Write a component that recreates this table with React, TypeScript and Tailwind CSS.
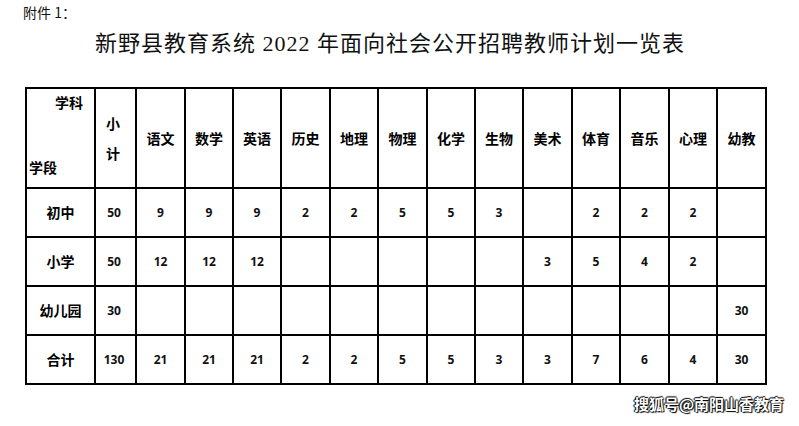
import React from "react";

const subjects = ["语文", "数学", "英语", "历史", "地理", "物理", "化学", "生物", "美术", "体育", "音乐", "心理", "幼教"];

const rows: { name: string; total: string; vals: string[] }[] = [
  { name: "初中", total: "50", vals: ["9", "9", "9", "2", "2", "5", "5", "3", "", "2", "2", "2", ""] },
  { name: "小学", total: "50", vals: ["12", "12", "12", "", "", "", "", "", "3", "5", "4", "2", ""] },
  { name: "幼儿园", total: "30", vals: ["", "", "", "", "", "", "", "", "", "", "", "", "30"] },
  { name: "合计", total: "130", vals: ["21", "21", "21", "2", "2", "5", "5", "3", "3", "7", "6", "4", "30"] },
];

export default function App() {
  return (
    <div className="w-[799px] h-[426px] bg-white text-black overflow-hidden font-[family-name:'Noto_Sans_CJK_SC',sans-serif]">
      <div className="pl-[23px] pt-[3px] text-[14px] leading-[18px] text-[#111]">附件 1：</div>
      <div className="pl-[95px] mt-[8px] text-[22px] leading-[30px] tracking-[1px] text-[#111] font-[family-name:'Liberation_Serif','Noto_Sans_CJK_SC',serif]">
        新野县教育系统 2022 年面向社会公开招聘教师计划一览表
      </div>
      <div className="ml-[25px] mt-[28px] w-fit bg-black p-[2px]">
        <div className="grid gap-[2px] grid-cols-[67px_39px_47px_46px_46px_47px_46px_47px_46px_46px_47px_46px_47px_46px_47px] grid-rows-[98px_47px_47px_47px_47px]">
          <div className="bg-white relative font-bold text-[14px]">
            <span className="absolute right-[11px] top-[3px]">学科</span>
            <span className="absolute left-[2px] bottom-[9px]">学段</span>
          </div>
          <div className="bg-white flex flex-col items-center justify-center gap-[14px] pr-[5px] font-bold text-[14px] leading-[16px]">
            <span>小</span>
            <span>计</span>
          </div>
          {subjects.map((s) => (
            <div key={s} className="bg-white flex items-center justify-center font-bold text-[14px]">
              {s}
            </div>
          ))}
          {rows.map((r) => (
            <React.Fragment key={r.name}>
              <div className="bg-white flex items-center justify-center font-bold text-[14px]">{r.name}</div>
              <div className="bg-white flex items-center justify-center pr-[3px] font-bold text-[12px] text-[#111] font-[family-name:'Open_Sans','Liberation_Sans',sans-serif]">
                {r.total}
              </div>
              {r.vals.map((v, i) => (
                <div
                  key={i}
                  className="bg-white flex items-center justify-center font-bold text-[12px] text-[#111] font-[family-name:'Open_Sans','Liberation_Sans',sans-serif]"
                >
                  {v}
                </div>
              ))}
            </React.Fragment>
          ))}
        </div>
      </div>
      <div className="flex justify-end pr-[15px] mt-[10px]">
        <span className="text-white font-bold text-[15px] leading-[18px] [text-shadow:0_0_1px_#000,1px_1px_1px_#000,-1px_0_1px_#000,0_-1px_1px_#000]">
          搜狐号@南阳山香教育
        </span>
      </div>
    </div>
  );
}
